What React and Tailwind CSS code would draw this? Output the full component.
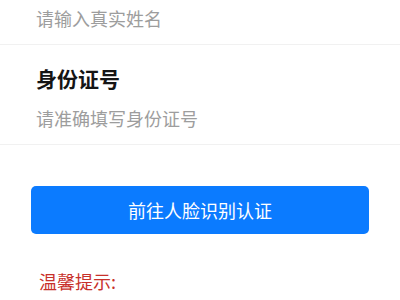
export default function App() {
  return (
    <div
      className="w-[400px] h-[300px] overflow-hidden bg-white"
      style={{ fontFamily: '"Noto Sans CJK SC", "Noto Sans", sans-serif' }}
    >
      <div className="pl-[36px] pt-[5px] pb-[13px] border-b border-[#f1f1f1]">
        <div className="text-[18px] leading-[26px] text-[#9d9d9d]">请输入真实姓名</div>
      </div>

      <div className="pl-[36px] pt-[19px] pb-[13px] border-b border-[#f1f1f1]">
        <div className="text-[21px] leading-[28px] font-bold text-[#151515]">身份证号</div>
        <div className="mt-[13px] text-[18px] leading-[26px] text-[#9d9d9d]">请准确填写身份证号</div>
      </div>

      <button className="mt-[41px] ml-[31px] w-[338px] h-[48px] rounded-[5px] bg-[#0b7bff] text-white text-[18px] flex items-center justify-center">
        前往人脸识别认证
      </button>

      <div className="mt-[34px] pl-[39px] text-[18px] leading-[26px] text-[#c8312b]">温馨提示:</div>
    </div>
  );
}
